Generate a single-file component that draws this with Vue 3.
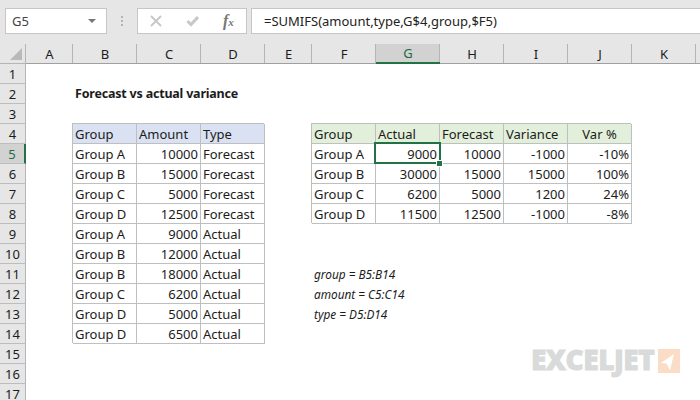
<script setup>
const columns = [
  { name: 'A', width: 47 }, { name: 'B', width: 64 }, { name: 'C', width: 64 }, { name: 'D', width: 64 },
  { name: 'E', width: 47 }, { name: 'F', width: 64 }, { name: 'G', width: 64, active: true }, { name: 'H', width: 64 },
  { name: 'I', width: 64 }, { name: 'J', width: 64 }, { name: 'K', width: 64 }, { name: '', width: 64 }
]
const gridColumns = '26px ' + columns.map(c => c.width + 'px').join(' ')

const blank = () => ({ text: '' })
const rows = Array.from({ length: 17 }, () => columns.map(blank))
const put = (r, c, text, kind = '') => { rows[r - 1][c] = { text, kind } }

put(2, 1, 'Forecast vs actual variance', 'title')

const left = [
  ['Group A', 10000, 'Forecast'], ['Group B', 15000, 'Forecast'], ['Group C', 5000, 'Forecast'],
  ['Group D', 12500, 'Forecast'], ['Group A', 9000, 'Actual'], ['Group B', 12000, 'Actual'],
  ['Group B', 18000, 'Actual'], ['Group C', 6200, 'Actual'], ['Group D', 5000, 'Actual'], ['Group D', 6500, 'Actual']
]
;['Group', 'Amount', 'Type'].forEach((h, i) => put(4, 1 + i, h, 'tb blue'))
left.forEach((row, i) => {
  put(5 + i, 1, row[0], 'tb')
  put(5 + i, 2, String(row[1]), 'tb num')
  put(5 + i, 3, row[2], 'tb')
})

const right = [
  ['Group A', 9000, 10000, -1000, '-10%'], ['Group B', 30000, 15000, 15000, '100%'],
  ['Group C', 6200, 5000, 1200, '24%'], ['Group D', 11500, 12500, -1000, '-8%']
]
;['Group', 'Actual', 'Forecast', 'Variance'].forEach((h, i) => put(4, 5 + i, h, 'tb green'))
put(4, 9, 'Var %', 'tb green center')
right.forEach((row, i) => {
  put(5 + i, 5, row[0], 'tb')
  for (let c = 1; c < 5; c++) put(5 + i, 5 + c, String(row[c]), 'tb num')
})
rows[4][6].kind += ' selected'

put(11, 5, 'group = B5:B14', 'note')
put(12, 5, 'amount = C5:C14', 'note')
put(13, 5, 'type = D5:D14', 'note')
</script>

<template>
  <div class="app">
    <div class="bar">
      <div class="namebox">
        <span>G5</span>
        <i class="caret"></i>
      </div>
      <div class="dots"><i></i><i></i><i></i></div>
      <div class="fxbox">
        <svg width="12" height="12" viewBox="0 0 12 12"><path d="M1 1 L11 11 M11 1 L1 11" stroke="#c8c8c8" stroke-width="2" fill="none"/></svg>
        <svg width="13" height="12" viewBox="0 0 13 12"><path d="M1.500 6 L5 9.500 L12 2" stroke="#c8c8c8" stroke-width="3" fill="none"/></svg>
        <span class="fx">f<small>x</small></span>
      </div>
      <div class="formula">=SUMIFS(amount,type,G$4,group,$F5)</div>
    </div>

    <div class="sheet" :style="{ gridTemplateColumns: gridColumns }">
      <div class="corner"><i></i></div>
      <div v-for="c in columns" :key="c.name" class="colhead" :class="{ active: c.active }">{{ c.name }}</div>
      <template v-for="(row, r) in rows" :key="r">
        <div class="rowhead" :class="{ active: r === 4 }">{{ r + 1 }}</div>
        <div v-for="(cell, c) in row" :key="c" class="cell" :class="cell.kind">
          {{ cell.text }}
          <template v-if="cell.kind && cell.kind.includes('selected')">
            <i class="sel"></i>
            <i class="handle"></i>
          </template>
        </div>
      </template>
    </div>

    <div class="logo">
      <span>EXCELJET</span>
      <svg width="22" height="24" viewBox="0 0 22 24"><rect width="22" height="24" fill="#fbdcc6"/><path d="M3 14 L16 5 L12 21.500 L8.500 14.500 Z" fill="#fff"/></svg>
    </div>
  </div>
</template>

<style>
html, body { margin: 0; background: #fff; }
</style>

<style scoped>
.app {
  position: relative;
  width: 700px;
  height: 400px;
  overflow: hidden;
  background: #fff;
  font-family: "Noto Sans", "Open Sans", sans-serif;
  font-size: 13px;
  color: #1c1c1c;
}
.bar {
  height: 44px;
  box-sizing: border-box;
  background: #e6e6e6;
  padding: 8px 0 10px 5px;
  display: flex;
  align-items: stretch;
}
.namebox, .fxbox, .formula {
  box-sizing: border-box;
  background: #fff;
  border: 1px solid #c6c6c6;
  display: flex;
  align-items: center;
}
.namebox {
  width: 102px;
  padding: 0 10px 0 6px;
  justify-content: space-between;
  font-size: 13px;
  color: #444;
}
.caret {
  width: 0;
  height: 0;
  border-left: 4px solid transparent;
  border-right: 4px solid transparent;
  border-top: 4px solid #777;
}
.dots {
  width: 30px;
  display: flex;
  flex-direction: column;
  align-items: center;
  justify-content: center;
  gap: 2px;
}
.dots i { width: 2px; height: 2px; background: #b4b4b4; }
.fxbox {
  width: 110px;
  padding: 0 0 0 12px;
  gap: 24px;
}
.fx {
  font-family: "Liberation Serif", serif;
  font-style: italic;
  font-weight: 700;
  font-size: 16px;
  color: #777;
}
.fx small { font-size: 11px; }
.formula {
  flex: 1;
  margin-left: 4px;
  border-right: 0;
  padding-left: 12px;
  font-size: 13px;
  color: #222;
}
.sheet {
  display: grid;
  grid-auto-rows: 20px;
  grid-template-rows: 20px;
}
.corner, .colhead, .rowhead {
  box-sizing: border-box;
  background: #e6e6e6;
  display: flex;
  align-items: center;
  justify-content: center;
}
.corner {
  border-right: 1px solid #b5b5b5;
  border-bottom: 1px solid #b5b5b5;
  justify-content: flex-end;
  align-items: flex-end;
  padding: 0 3px 3px 0;
}
.corner i {
  width: 0;
  height: 0;
  border-left: 12px solid transparent;
  border-bottom: 12px solid #b9b9b9;
}
.colhead {
  border-bottom: 1px solid #a0a0a0;
  position: relative;
}
.colhead::after {
  content: "";
  position: absolute;
  right: 0;
  top: 0;
  bottom: 0;
  width: 1px;
  background: #b5b5b5;
}
.colhead.active {
  background: #d2d2d2;
  color: #1f6b43;
  border-bottom: 2px solid #217346;
}
.rowhead {
  border-right: 1px solid #b5b5b5;
  border-bottom: 1px solid #bdbdbd;
}
.rowhead.active {
  background: #d2d2d2;
  color: #1f6b43;
  border-right: 2px solid #217346;
}
.cell {
  box-sizing: border-box;
  padding: 0 2px;
  line-height: 20px;
  white-space: nowrap;
  position: relative;
}
.tb {
  border-right: 1px solid #bfbfbf;
  border-bottom: 1px solid #bfbfbf;
  box-shadow: -1px -1px 0 #bfbfbf;
  line-height: 21px;
}
.num { text-align: right; }
.center { text-align: center; }
.blue { background: #d9e1f2; }
.green { background: #e2efda; }
.title { font-weight: 700; font-size: 12.500px; letter-spacing: -0.2px; }
.note { font-style: italic; font-size: 11.800px; line-height: 21px; }
.sel {
  position: absolute;
  left: -2px;
  top: -2px;
  right: -2px;
  bottom: -1px;
  border: 2px solid #217346;
  z-index: 2;
}
.handle {
  position: absolute;
  right: -4px;
  bottom: -4px;
  width: 5px;
  height: 5px;
  background: #217346;
  border: 1px solid #fff;
  z-index: 3;
}
.logo {
  position: absolute;
  left: 531px;
  top: 349px;
  display: flex;
  align-items: flex-start;
  gap: 4px;
}
.logo span {
  font-family: "Open Sans", sans-serif;
  font-weight: 800;
  font-size: 28px;
  line-height: 21px;
  letter-spacing: -0.5px;
  -webkit-text-stroke: 0.8px #d9dada;
  color: #d9dada;
}
</style>
